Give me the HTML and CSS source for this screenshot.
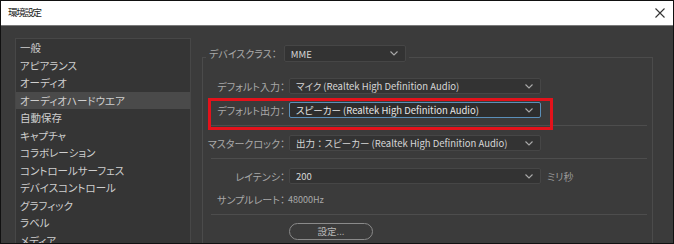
FILE: index.html
```html
<!DOCTYPE html>
<html lang="ja">
<head>
<meta charset="utf-8">
<title>環境設定</title>
<link rel="stylesheet" href="styles.css">
</head>
<body>
<div class="window">
  <div class="titlebar">
    <span class="title">環境設定</span>
    <svg class="close" width="10" height="10" viewBox="0 0 10 10"><path d="M0.5 0.5L9.5 9.5M9.5 0.5L0.5 9.5" stroke="#333" stroke-width="1.1" fill="none"/></svg>
  </div>
  <div class="body">
    <ul class="sidebar">
      <li>一般</li>
      <li>アピアランス</li>
      <li>オーディオ</li>
      <li class="selected">オーディオハードウエア</li>
      <li>自動保存</li>
      <li>キャプチャ</li>
      <li>コラボレーション</li>
      <li>コントロールサーフェス</li>
      <li>デバイスコントロール</li>
      <li>グラフィック</li>
      <li>ラベル</li>
      <li>メディア</li>
    </ul>
    <div class="content">
      <div class="group">
        <div class="legend">
          <span class="legend-label">デバイスクラス：</span>
          <div class="select select-short"><span>MME</span><svg class="chev" width="8" height="5" viewBox="0 0 8 5"><path d="M0.5 0.5L4 4L7.5 0.5" stroke="#aaa" stroke-width="1.1" fill="none"/></svg></div>
        </div>
        <div class="row first">
          <span class="label">デフォルト入力：</span>
          <div class="select"><span>マイク (Realtek High Definition Audio)</span><svg class="chev" width="8" height="5" viewBox="0 0 8 5"><path d="M0.5 0.5L4 4L7.5 0.5" stroke="#aaa" stroke-width="1.1" fill="none"/></svg></div>
        </div>
        <div class="row highlight">
          <span class="label">デフォルト出力：</span>
          <div class="select focused"><span>スピーカー (Realtek High Definition Audio)</span><svg class="chev" width="8" height="5" viewBox="0 0 8 5"><path d="M0.5 0.5L4 4L7.5 0.5" stroke="#aaa" stroke-width="1.1" fill="none"/></svg></div>
        </div>
        <div class="sep"></div>
        <div class="row">
          <span class="label">マスタークロック：</span>
          <div class="select"><span>出力<span class="wide">：</span>スピーカー (Realtek High Definition Audio)</span><svg class="chev" width="8" height="5" viewBox="0 0 8 5"><path d="M0.5 0.5L4 4L7.5 0.5" stroke="#aaa" stroke-width="1.1" fill="none"/></svg></div>
        </div>
        <div class="sep"></div>
        <div class="row">
          <span class="label">レイテンシ：</span>
          <div class="select"><span>200</span><svg class="chev" width="8" height="5" viewBox="0 0 8 5"><path d="M0.5 0.5L4 4L7.5 0.5" stroke="#aaa" stroke-width="1.1" fill="none"/></svg></div>
          <span class="unit">ミリ秒</span>
        </div>
        <div class="row plain">
          <span class="label">サンプルレート：</span>
          <span class="value">48000Hz</span>
        </div>
        <div class="sep"></div>
        <div class="row btnrow">
          <span class="label"></span>
          <button class="btn">設定...</button>
        </div>
      </div>
    </div>
  </div>
</div>
</body>
</html>
```
FILE: styles.css
```css
* { box-sizing: border-box; }
html, body { margin: 0; padding: 0; }
body {
  width: 674px;
  height: 244px;
  overflow: hidden;
  font-family: "Noto Sans CJK JP", "Noto Sans", sans-serif;
  font-feature-settings: "palt";
  background: #3b3b3b;
}
.window {
  width: 674px;
  height: 244px;
  border: 1px solid #111;
  display: flex;
  flex-direction: column;
  overflow: hidden;
  background: #3b3b3b;
}
.titlebar {
  height: 25px;
  flex: none;
  background: #fff;
  border-bottom: 1px solid #7a7a7a;
  display: flex;
  align-items: center;
  justify-content: space-between;
  padding: 0 7px 1px 7px;
}
.title {
  font-size: 9.5px;
  letter-spacing: -1.3px;
  color: #222;
  line-height: 1;
}
.close { margin-right: 1px; }
.body {
  flex: 1;
  display: flex;
  padding: 12px 0 0 14px;
  min-height: 0;
}
.sidebar {
  list-style: none;
  margin: 0;
  padding: 0;
  width: 176px;
  flex: none;
  background: #353535;
  border: 1px solid #474747;
  border-bottom: none;
  overflow: hidden;
}
.sidebar li {
  height: 17.5px;
  line-height: 17.5px;
  font-size: 10.5px;
  color: #cfcfcf;
  padding-left: 4px;
  white-space: nowrap;
}
.sidebar li.selected { background: #4a4a4a; }
.content {
  flex: 1;
  padding: 19px 20px 0 11px;
  min-width: 0;
}
.group {
  border: 1px solid #4b4b4b;
  border-bottom: none;
  height: 200px;
  padding: 0 5px 0 0;
}
.legend {
  display: flex;
  align-items: center;
  width: max-content;
  margin: -13px 0 0 3px;
  padding: 0 3px 0 3px;
  background: #3b3b3b;
  gap: 7px;
}
.legend-label, .label {
  font-size: 10px;
  color: #a9a9a9;
  white-space: nowrap;
}
.select {
  width: 252px;
  height: 16px;
  background: #333;
  border: 1px solid #464646;
  border-radius: 2px;
  display: flex;
  align-items: center;
  justify-content: space-between;
  padding: 0 7px 0 6px;
  font-size: 9.5px;
  color: #d6d6d6;
  white-space: nowrap;
}
.select .wide { font-feature-settings: normal; }
.select-short { width: 122px; height: 17px; }
.select.focused {
  border-color: #5b8fb9;
  background: #2d2d2d;
  color: #e6e6e6;
}
.chev { flex: none; }
.row {
  display: flex;
  align-items: center;
  height: 16px;
  position: relative;
}
.row .label {
  width: 82px;
  text-align: right;
  margin-right: 4px;
  flex: none;
}
.row.first { margin-top: 16px; }
.row.highlight { margin-top: 8px; }
.row.highlight::after {
  content: "";
  position: absolute;
  left: 5px;
  top: -4px;
  width: 339px;
  height: 26px;
  border: 3px solid #e3121b;
}
.sep {
  height: 1px;
  background: #4d4d4d;
  margin: 7px 0 9px 8px;
}
.unit {
  font-size: 10px;
  color: #9a9a9a;
  margin-left: 6px;
}
.row.plain { margin-top: 7px; }
.row.plain .label { margin-right: 3px; }
.value {
  font-size: 9px;
  color: #a9a9a9;
}
.btnrow { height: 17px; margin-top: -1px; }
.btn {
  width: 84px;
  height: 17px;
  border: 1px solid #8a8a8a;
  border-radius: 9px;
  background: #3b3b3b;
  color: #b8b8b8;
  font-family: "Noto Sans CJK JP", sans-serif;
  font-size: 9.5px;
  padding: 0;
  line-height: 15px;
}
```
